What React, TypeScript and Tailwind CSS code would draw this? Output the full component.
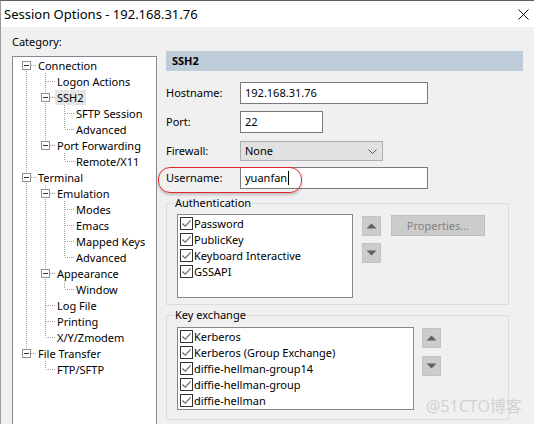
import React from 'react';

type TreeNode = { label: string; children?: TreeNode[]; selected?: boolean };

type TreeRow = {
  label: string;
  depth: number;
  guides: boolean[];
  isLast: boolean;
  isFirstRoot: boolean;
  hasChildren: boolean;
  selected?: boolean;
};

const categories: TreeNode[] = [
  {
    label: 'Connection',
    children: [
      { label: 'Logon Actions' },
      { label: 'SSH2', selected: true, children: [{ label: 'SFTP Session' }, { label: 'Advanced' }] },
      { label: 'Port Forwarding', children: [{ label: 'Remote/X11' }] },
    ],
  },
  {
    label: 'Terminal',
    children: [
      { label: 'Emulation', children: [{ label: 'Modes' }, { label: 'Emacs' }, { label: 'Mapped Keys' }, { label: 'Advanced' }] },
      { label: 'Appearance', children: [{ label: 'Window' }] },
      { label: 'Log File' },
      { label: 'Printing' },
      { label: 'X/Y/Zmodem' },
    ],
  },
  { label: 'File Transfer', children: [{ label: 'FTP/SFTP' }] },
];

const flatten = (nodes: TreeNode[], depth = 0, guides: boolean[] = []): TreeRow[] =>
  nodes.flatMap((node, i) => {
    const isLast = i === nodes.length - 1;
    const row: TreeRow = {
      label: node.label,
      depth,
      guides,
      isLast,
      isFirstRoot: depth === 0 && i === 0,
      hasChildren: !!node.children,
      selected: node.selected,
    };
    return [row, ...(node.children ? flatten(node.children, depth + 1, [...guides, !isLast]) : [])];
  });

const dot = { stroke: '#a0a0a0', strokeWidth: 1, strokeDasharray: '1 1' };

const GuideCell = ({ pass }: { pass: boolean }) => (
  <svg width="19" height="16" className="shrink-0" shapeRendering="crispEdges">
    {pass && <line x1="9.5" y1="0" x2="9.5" y2="16" {...dot} />}
  </svg>
);

const NodeCell = ({ row }: { row: TreeRow }) => (
  <svg width="19" height="16" className="shrink-0" shapeRendering="crispEdges">
    {!row.isFirstRoot && <line x1="9.5" y1="0" x2="9.5" y2="8" {...dot} />}
    {!row.isLast && <line x1="9.5" y1="8" x2="9.5" y2="16" {...dot} />}
    <line x1={row.hasChildren ? 14 : 10} y1="8.5" x2="19" y2="8.5" {...dot} />
    {row.hasChildren && (
      <>
        <rect x="5.5" y="4.5" width="8" height="8" fill="#fff" stroke="#919191" />
        <line x1="7" y1="8.5" x2="12" y2="8.5" stroke="#333" />
      </>
    )}
  </svg>
);

const CategoryTree = () => (
  <div className="mt-[6px] w-[145px] h-[380px] border border-[#828790] bg-white pl-[4px]">
    {flatten(categories).map((row, i) => (
      <div key={i} className="flex h-[16px] items-center">
        {row.guides.map((g, j) => (
          <GuideCell key={j} pass={g} />
        ))}
        <NodeCell row={row} />
        <span className={`h-[15px] px-[2px] leading-[15px] whitespace-nowrap ${row.selected ? 'bg-[#e5e5e5]' : ''}`}>
          {row.label}
        </span>
      </div>
    ))}
  </div>
);

const CheckBox = () => (
  <span className="ml-[2px] flex h-[13px] w-[13px] shrink-0 items-center justify-center border border-[#333] bg-white">
    <svg width="11" height="11" viewBox="0 0 11 11">
      <path d="M1.5 5.5 L4.2 8.3 L9.6 2.4" fill="none" stroke="#5a5a5a" strokeWidth="1.1" />
    </svg>
  </span>
);

const CheckList = ({ items, className }: { items: string[]; className: string }) => (
  <div className={`border border-[#828790] bg-white ${className}`}>
    {items.map((item) => (
      <div key={item} className="flex h-[16px] items-center">
        <CheckBox />
        <span className="ml-[1px] pt-[1px] whitespace-nowrap">{item}</span>
      </div>
    ))}
  </div>
);

const ArrowButton = ({ up, className = '' }: { up?: boolean; className?: string }) => (
  <div className={`flex h-[20px] w-[19px] items-center justify-center border border-[#c2c2c2] bg-[#cccccc] ${className}`}>
    <svg width="11" height="6" viewBox="0 0 11 6">
      <path d={up ? 'M0.5 5.5 L5.5 0.5 L10.5 5.5 Z' : 'M0.5 0.5 L5.5 5.5 L10.5 0.5 Z'} fill="#606060" />
    </svg>
  </div>
);

const FieldRow = ({ label, children, className = '' }: { label: string; children: React.ReactNode; className?: string }) => (
  <div className={`flex items-center ${className}`}>
    <span className="w-[74px] shrink-0">{label}</span>
    {children}
  </div>
);

const App = () => {
  return (
    <div className="relative h-[424px] w-[534px] overflow-hidden border-l border-t border-l-[#9a9a9a] border-t-[#5f5f5f] bg-[#f0f0f0] font-['Noto_Sans',sans-serif] text-[11px] leading-[16px] text-black">
      {/* Title bar */}
      <div className="flex h-[26px] items-center justify-between bg-white pl-[3px] pr-[5px]">
        <span className="text-[13px]">Session Options - 192.168.31.76</span>
        <svg width="11" height="11" viewBox="0 0 11 11">
          <path d="M0.5 0.5 L10.5 10.5 M10.5 0.5 L0.5 10.5" stroke="#111" strokeWidth="1" />
        </svg>
      </div>

      <div className="flex pl-[11px]">
        {/* Category column */}
        <div className="flex flex-col pt-[7px]">
          <span>Category:</span>
          <CategoryTree />
        </div>

        {/* SSH2 page */}
        <div className="ml-[9px] flex flex-col pt-[24px]">
          <div className="flex h-[20px] w-[357px] items-center bg-[#bfcddb] pl-[6px] font-bold">SSH2</div>

          <FieldRow label="Hostname:" className="mt-[11px]">
            <div className="flex h-[22px] w-[188px] items-center border border-[#7a7a7a] bg-white pl-[4px]">192.168.31.76</div>
          </FieldRow>
          <FieldRow label="Port:" className="mt-[7px]">
            <div className="flex h-[22px] w-[83px] items-center border border-[#7a7a7a] bg-white pl-[4px]">22</div>
          </FieldRow>
          <FieldRow label="Firewall:" className="mt-[8px]">
            <div className="flex h-[20px] w-[143px] items-center justify-between border border-[#adadad] bg-[#e1e1e1] pl-[4px] pr-[5px]">
              <span>None</span>
              <svg width="9" height="5" viewBox="0 0 9 5">
                <path d="M0.5 0.5 L4.5 4.5 L8.5 0.5" fill="none" stroke="#555" strokeWidth="1" />
              </svg>
            </div>
          </FieldRow>
          <FieldRow label="Username:" className="mt-[6px]">
            <div className="flex h-[22px] w-[188px] items-center border border-[#7a7a7a] bg-white pl-[4px]">
              <span>yuanfan</span>
              <span className="ml-[1px] h-[14px] w-[1px] bg-black" />
            </div>
          </FieldRow>

          <fieldset className="mt-[6px] w-[343px] border border-[#dcdcdc] pb-[6px]">
            <legend className="ml-[7px] px-[1px]">Authentication</legend>
            <div className="flex pl-[10px] pt-[3px]">
              <CheckList items={['Password', 'PublicKey', 'Keyboard Interactive', 'GSSAPI']} className="h-[84px] w-[176px]" />
              <div className="ml-[9px] flex flex-col">
                <ArrowButton up className="mt-[2px]" />
                <ArrowButton className="mt-[7px]" />
              </div>
              <div className="ml-[10px] mt-[1px] flex h-[21px] w-[94px] items-center justify-center border border-[#bfbfbf] bg-[#cccccc] text-[#838383]">
                Properties...
              </div>
            </div>
          </fieldset>

          <fieldset className="mt-[2px] w-[343px] border border-[#dcdcdc] pb-[9px]">
            <legend className="ml-[7px] px-[1px]">Key exchange</legend>
            <div className="flex pl-[10px] pt-[4px]">
              <CheckList
                items={['Kerberos', 'Kerberos (Group Exchange)', 'diffie-hellman-group14', 'diffie-hellman-group', 'diffie-hellman']}
                className="h-[83px] w-[237px]"
              />
              <div className="ml-[8px] flex flex-col">
                <ArrowButton up className="mt-[1px]" />
                <ArrowButton className="mt-[8px]" />
              </div>
            </div>
          </fieldset>
        </div>
      </div>

      {/* Annotation around the username field */}
      <div className="absolute left-[157px] top-[166px] h-[26px] w-[144px] rounded-[12px] border-[1.5px] border-[#e3262b] shadow-[0_2px_3px_rgba(0,0,0,0.2)]" />

      {/* Watermark */}
      <span className="absolute left-[425px] top-[395px] font-['Noto_Sans','Noto_Sans_CJK_SC',sans-serif] text-[16px] leading-[20px] text-[#d2d2d2]">
        @51CTO博客
      </span>
    </div>
  );
};

export default App;
